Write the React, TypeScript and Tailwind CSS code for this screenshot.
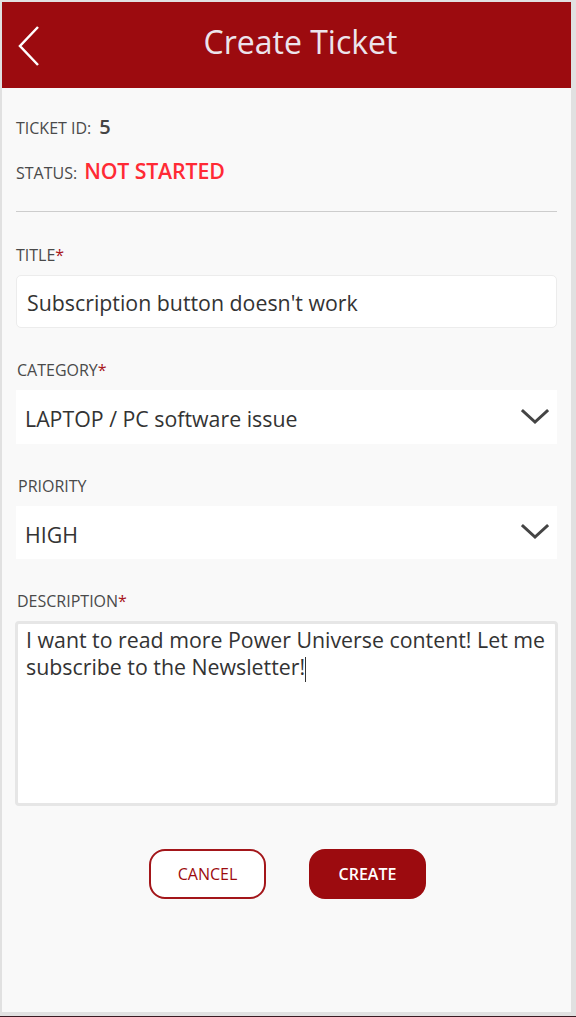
import React from "react";

const Chevron = () => (
  <svg width="28" height="18" viewBox="0 0 28 18" fill="none">
    <path d="M2 3 L14 14 L26 3" stroke="#444" strokeWidth="3" strokeLinecap="square" />
  </svg>
);

const Label = ({ text, req }: { text: string; req?: boolean }) => (
  <div className="text-[16px] leading-[20px] text-[#4a4a4a]">
    {text}
    {req && <span className="text-[#a8141a]">*</span>}
  </div>
);

export default function App() {
  return (
    <div
      className="w-[576px] h-[1017px] bg-[#e1e1e1] flex flex-col"
      style={{ fontFamily: '"Open Sans", "Noto Sans", sans-serif' }}
    >
      <div className="ml-[2px] mt-[2px] mr-[5px] h-[1010px] bg-[#f9f9f9] flex flex-col">
        <div className="h-[86px] bg-[#9c0b0f] flex items-center relative">
          <svg className="absolute left-[15px] top-[23px]" width="24" height="42" viewBox="0 0 24 42" fill="none">
            <path d="M21 2 L3 21 L21 40" stroke="#ffffff" strokeWidth="2.5" />
          </svg>
          <div className="w-full text-center text-[32px] text-[#ece4ec] pl-[28px] pb-[6px]">Create Ticket</div>
        </div>
        <div className="px-[14px] flex flex-col">
          <div className="mt-[24px] flex items-baseline gap-[8px]">
            <span className="text-[16px] text-[#4a4a4a]">TICKET ID:</span>
            <span className="text-[20px] font-semibold text-[#444]">5</span>
          </div>
          <div className="mt-[13px] flex items-baseline gap-[7px]">
            <span className="text-[16px] text-[#4a4a4a]">STATUS:</span>
            <span className="text-[21.33px] font-semibold tracking-[-0.15px] text-[#ff2a35]">NOT STARTED</span>
          </div>
          <div className="mt-[24px] h-px bg-[#cdcdcd]" />
          <div className="mt-[33px]">
            <Label text="TITLE" req />
          </div>
          <div className="mt-[10px] h-[53px] bg-white border border-[#ececec] rounded-[5px] flex items-center px-[10px] pt-[3px] text-[21.33px] text-[#333]">
            Subscription button doesn't work
          </div>
          <div className="mt-[32px] pl-[1px]">
            <Label text="CATEGORY" req />
          </div>
          <div className="mt-[10px] h-[54px] bg-white flex items-center justify-between pl-[9px] pr-[8px] text-[21.33px] text-[#333]">
            <span className="pt-[4px]">LAPTOP / PC software issue</span>
            <Chevron />
          </div>
          <div className="mt-[32px] pl-[2px]">
            <Label text="PRIORITY" />
          </div>
          <div className="mt-[10px] h-[53px] bg-white flex items-center justify-between pl-[9px] pr-[8px] text-[21.33px] text-[#333]">
            <span className="pt-[5px]">HIGH</span>
            <Chevron />
          </div>
          <div className="mt-[32px] pl-[1px]">
            <Label text="DESCRIPTION" req />
          </div>
          <div className="mt-[10px] -mx-[1px] h-[185px] bg-white border-[3px] border-[#e6e6e6] rounded-[4px] px-[8px] pt-[2px] text-[21.33px] leading-[27px] text-[#333]">
            I want to read more Power Universe content! Let me subscribe to the Newsletter!
            <span className="inline-block w-px h-[25px] bg-[#333] align-middle" />
          </div>
          <div className="mt-[43px] flex justify-center gap-[43px] pl-[2px]">
            <button className="w-[117px] h-[50px] rounded-[16px] border-2 border-[#a3161a] bg-white text-[16px] text-[#9c0b0f]">
              CANCEL
            </button>
            <button className="w-[117px] h-[50px] rounded-[16px] bg-[#9c0b0f] text-[16px] font-semibold text-white">
              CREATE
            </button>
          </div>
        </div>
      </div>
      <div className="mt-auto h-[1px] bg-[#3a1a22]" />
    </div>
  );
}
